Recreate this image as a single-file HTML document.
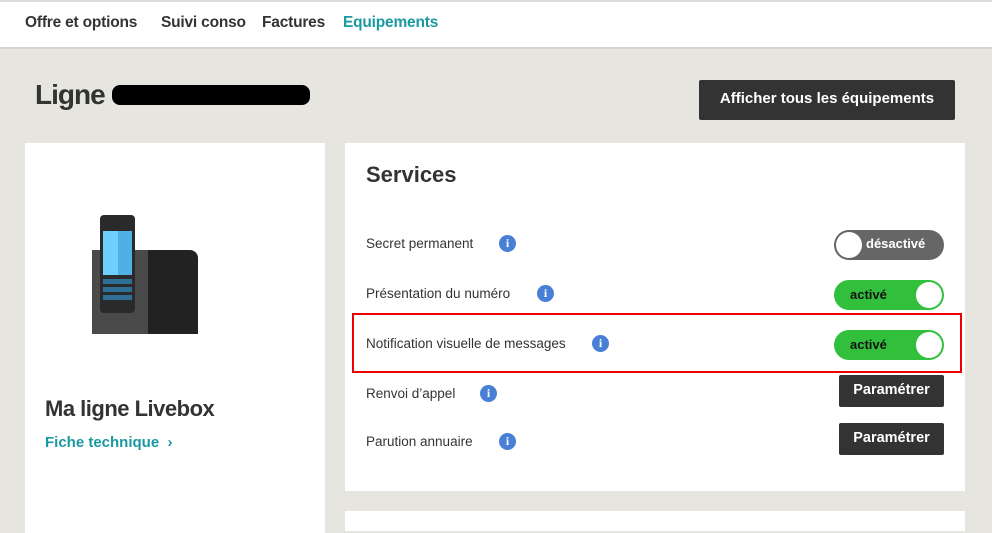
<html><head><style>
body{margin:0;width:992px;height:523px;background:#e6e5df;font-family:"Liberation Sans",sans-serif;position:relative;overflow:hidden;color:#333}
.a{position:absolute}
.nav{left:0;top:0;width:992px;height:49px;background:#fff;border-top:2px solid #ddd;border-bottom:2px solid #d4d4d4;box-sizing:border-box}
.nav span{position:absolute;top:12px;font-size:15.5px;font-weight:bold;color:#333;letter-spacing:-0.2px}
.lbl{font-size:13.5px;color:#333}
.i{width:17px;height:17px;border-radius:50%;background:#4a7fd6;color:#fff;font-size:12px;font-weight:bold;text-align:center;line-height:17px;font-family:"Liberation Serif",serif}
.tg{width:110px;height:30px;border-radius:15px;font-size:13px;font-weight:bold;box-sizing:border-box}
.on{background:#32c03c;color:#111}
.off{background:#666;color:#fff}
.kn{position:absolute;top:2px;width:26px;height:26px;border-radius:50%;background:#fff}
.pb{width:105px;height:32px;background:#333;color:#fff;font-weight:bold;font-size:14.5px;text-align:center;line-height:30px;border-radius:2px}
</style></head><body>
<div class="a nav"><span style="left:25px">Offre et options</span><span style="left:161px">Suivi conso</span><span style="left:262px">Factures</span><span style="left:343px;color:#1a9aa0">Equipements</span></div>
<div class="a" style="left:35px;top:79px;font-size:28px;font-weight:bold;letter-spacing:-1px">Ligne</div>
<div class="a" style="left:112px;top:85px;width:198px;height:20px;background:#000;border-radius:8px"></div>
<div class="a" style="left:699px;top:80px;width:256px;height:40px;background:#333;color:#fff;font-weight:bold;font-size:15px;text-align:center;line-height:38px;border-radius:2px">Afficher tous les équipements</div>
<div class="a" style="left:25px;top:143px;width:300px;height:390px;background:#fff"></div>
<svg class="a" style="left:90px;top:212px" width="110" height="125"><rect x="2" y="38" width="56" height="84" fill="#4a4a4a"/><path d="M58 38H100a8 8 0 0 1 8 8V122H58z" fill="#222"/><rect x="10" y="3" width="35" height="98" rx="4" fill="#2a2a2a"/><rect x="13" y="19" width="29" height="44" fill="#4fb0e8"/><rect x="13" y="19" width="15" height="44" fill="#6dd0ff"/><rect x="13" y="67" width="29" height="5" fill="#2e6f96"/><rect x="13" y="75" width="29" height="5" fill="#2e6f96"/><rect x="13" y="83" width="29" height="5" fill="#2e6f96"/></svg>
<div class="a" style="left:45px;top:396px;font-size:22px;font-weight:bold;letter-spacing:-0.5px">Ma ligne Livebox</div>
<div class="a" style="left:45px;top:434px;font-size:15px;font-weight:bold;color:#1a9aa0">Fiche technique &nbsp;›</div>
<div class="a" style="left:345px;top:143px;width:620px;height:348px;background:#fff"></div>
<div class="a" style="left:345px;top:511px;width:620px;height:20px;background:#fff"></div>
<div class="a" style="left:366px;top:162px;font-size:22px;font-weight:bold">Services</div>
<div class="a lbl" style="left:366px;top:236px">Secret permanent</div><div class="a i" style="left:499px;top:235px">i</div>
<div class="a lbl" style="left:366px;top:286px">Présentation du numéro</div><div class="a i" style="left:537px;top:285px">i</div>
<div class="a lbl" style="left:366px;top:336px">Notification visuelle de messages</div><div class="a i" style="left:592px;top:335px">i</div>
<div class="a lbl" style="left:366px;top:386px">Renvoi d’appel</div><div class="a i" style="left:480px;top:385px">i</div>
<div class="a lbl" style="left:366px;top:434px">Parution annuaire</div><div class="a i" style="left:499px;top:433px">i</div>
<div class="a tg off" style="left:834px;top:230px;line-height:28px;padding-left:32px">désactivé<div class="kn" style="left:2px"></div></div>
<div class="a tg on" style="left:834px;top:280px;line-height:30px;padding-left:16px">activé<div class="kn" style="left:82px"></div></div>
<div class="a tg on" style="left:834px;top:330px;line-height:30px;padding-left:16px">activé<div class="kn" style="left:82px"></div></div>
<div class="a" style="left:352px;top:313px;width:610px;height:60px;border:2px solid #e00;box-sizing:border-box"></div>
<div class="a pb" style="left:839px;top:375px">Paramétrer</div>
<div class="a pb" style="left:839px;top:423px">Paramétrer</div>
</body></html>
